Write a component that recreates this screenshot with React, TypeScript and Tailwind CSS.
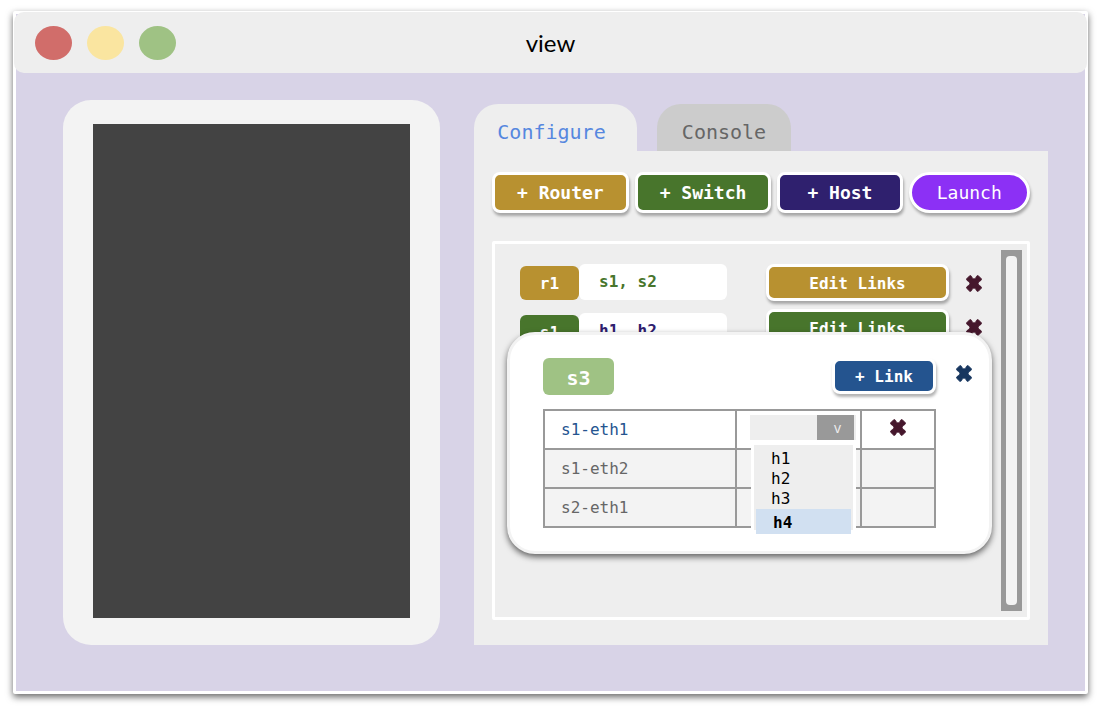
import React from 'react';

type Tone = 'gold' | 'green' | 'navy';

const toneBg: Record<Tone, string> = {
  gold: 'bg-[#b89130]',
  green: 'bg-[#48752c]',
  navy: 'bg-[#2f206e]',
};

const devices: { name: string; tone: Tone; links: string; linksClass: string }[] = [
  { name: 'r1', tone: 'gold', links: 's1, s2', linksClass: 'text-[#48752c]' },
  { name: 's1', tone: 'green', links: 'h1, h2', linksClass: 'text-[#2f206e]' },
];

const ports = [
  { name: 's1-eth1', active: true },
  { name: 's1-eth2', active: false },
  { name: 's2-eth1', active: false },
];

const hosts = ['h1', 'h2', 'h3'];

const raised = 'border-3 border-white shadow-[1px_3px_3px_rgba(0,0,0,0.3)]';

function Cross() {
  return (
    <svg viewBox="0 0 16 17" className="block h-[17px] w-4" fill="currentColor" aria-hidden="true">
      <path d="M4 0.4 L5.4 1.2 L6.4 3.2 L8 4 L9.6 3.2 L10.6 1.2 L12 0.4 L15.6 4 L15 5.4 L12.9 6.8 L12.1 8.5 L12.9 10.2 L15 11.6 L15.6 13 L12 16.6 L10.6 15.8 L9.6 13.8 L8 13 L6.4 13.8 L5.4 15.8 L4 16.6 L0.4 13 L1 11.6 L3.1 10.2 L3.9 8.5 L3.1 6.8 L1 5.4 L0.4 4 Z" stroke="currentColor" strokeWidth="0.8" strokeLinejoin="round" />
    </svg>
  );
}

function AddButton({ label, tone, grow }: { label: string; tone: Tone; grow: string }) {
  return (
    <button type="button" className={`${grow} ${toneBg[tone]} ${raised} h-[41px] rounded-lg text-lg font-bold text-white`}>
      {label}
    </button>
  );
}

function LinkDialog() {
  return (
    <section
      role="dialog"
      aria-label="Links of s3"
      className="absolute top-[88px] right-[35px] left-3 rounded-[28px] border-3 border-[#f3f3f3] bg-white pt-[23px] pr-[17px] pb-[23px] pl-[33px] shadow-[0_3px_6px_rgba(0,0,0,0.6)]"
    >
      <div className="flex items-start">
        <h2 className="flex h-[37px] w-[71px] items-center justify-center rounded-md bg-[#9fc284] pt-[2px] text-xl font-bold text-white">
          s3
        </h2>
        <button type="button" className={`${raised} ml-auto h-9 w-[104px] rounded-lg bg-[#24548f] pt-[2px] text-base font-bold text-white`}>
          + Link
        </button>
        <button type="button" aria-label="Close" className="mt-[7px] ml-[20px] text-[#17365f]">
          <Cross />
        </button>
      </div>
      <table className="mt-[14px] w-[391px] table-fixed border-collapse">
        <colgroup>
          <col className="w-[192px]" />
          <col className="w-[125px]" />
          <col className="w-[74px]" />
        </colgroup>
        <tbody>
          {ports.map((port) => (
            <tr key={port.name} className={port.active ? 'h-[39px] bg-white' : 'h-[39px] bg-[#f3f3f3]'}>
              <td className={`border-2 border-[#999999] py-0 pl-[16px] text-base leading-6 ${port.active ? 'text-[#24548f]' : 'text-[#666666]'}`}>
                {port.name}
              </td>
              <td className="border-2 border-[#999999] p-0 pl-[13px] align-top">{port.active && <HostPicker />}</td>
              <td className="border-2 border-[#999999] p-0 pt-2 align-top">
                {port.active && (
                  <button type="button" aria-label={`Remove ${port.name}`} className="mx-auto block text-[#45172c]">
                    <Cross />
                  </button>
                )}
              </td>
            </tr>
          ))}
        </tbody>
      </table>
    </section>
  );
}

function HostPicker() {
  return (
    <div className="relative mt-1 w-[106px]">
      <select aria-label="Link target" defaultValue="" className="block h-[25px] w-full appearance-none bg-[#eeeeee] text-base">
        <option value=""></option>
        {[...hosts, 'h4'].map((host) => (
          <option key={host}>{host}</option>
        ))}
      </select>
      <span className="pointer-events-none absolute inset-y-0 right-[2px] flex w-[37px] items-center justify-center bg-[#999999] pl-1 font-['Open_Sans',sans-serif] text-sm text-[#eeeeee]">
        v
      </span>
      <ul role="listbox" aria-label="Hosts" className="absolute top-[27px] left-[1px] w-[105px] border-3 border-white bg-[#eeeeee] pt-1 text-base leading-5 text-black">
        {hosts.map((host) => (
          <li key={host} role="option" aria-selected="false" className="pl-[17px]">
            {host}
          </li>
        ))}
        <li role="option" aria-selected="true" className="mx-[2px] -mb-1 bg-[#d1e0f1] pt-[3px] pl-[17px] font-bold leading-[22px]">
          h4
        </li>
      </ul>
    </div>
  );
}

export default function App() {
  return (
    <div className="flex min-h-screen flex-col bg-white pt-[11px] pr-3 pb-3 pl-[13px] font-['DejaVu_Sans_Mono',monospace]">
      <div className="flex flex-1 flex-col rounded-[2px] border-3 border-white bg-[#d8d3e7] shadow-[0_3px_7px_rgba(0,0,0,0.6)]">
        <header className="-mx-[2px] -mt-[2px] grid h-[61px] grid-cols-[1fr_auto_1fr] items-center rounded-[10px] bg-[#eeeeee] px-[21px]">
          <div className="flex gap-[15px]">
            <span className="h-[34px] w-[37px] rounded-[50%] bg-[#d16d6a]" />
            <span className="h-[34px] w-[37px] rounded-[50%] bg-[#fae5a0]" />
            <span className="h-[34px] w-[37px] rounded-[50%] bg-[#9fc284]" />
          </div>
          <h1 className="font-['Lato',sans-serif] text-2xl text-black">view</h1>
        </header>

        <main className="grid flex-1 grid-cols-[377fr_574fr] gap-[34px] pt-[27px] pr-[37px] pb-[46px] pl-[47px]">
          <section aria-label="Topology" className="flex rounded-[28px] bg-[#f3f3f3] px-[30px] pt-6 pb-[27px]">
            <div className="flex-1 bg-[#434343]" />
          </section>

          <section className="flex flex-col pt-1">
            <div role="tablist" className="flex gap-5">
              <button type="button" role="tab" aria-selected="true" className="h-[47px] w-[163px] rounded-t-3xl bg-[#eeeeee] pt-2 pr-2 text-xl text-[#5687df]">
                Configure
              </button>
              <button type="button" role="tab" aria-selected="false" className="h-[47px] w-[134px] rounded-t-3xl bg-[#cccccc] pt-2 text-xl text-[#666666]">
                Console
              </button>
            </div>

            <div className="flex flex-1 flex-col bg-[#eeeeee] pt-[21px] pr-[18px] pb-[25px] pl-[18px]">
              <div className="flex gap-[6px]">
                <AddButton label="+ Router" tone="gold" grow="flex-[137]" />
                <AddButton label="+ Switch" tone="green" grow="flex-[137]" />
                <AddButton label="+ Host" tone="navy" grow="flex-[125]" />
                <button type="button" className={`${raised} h-[41px] flex-[121] rounded-full bg-[#8c30f5] text-lg text-white`}>
                  Launch
                </button>
              </div>

              <div className="relative mt-7 flex flex-1 rounded-[2px] border-3 border-white py-[6px] pr-[5px] pl-[25px]">
                <div className="flex flex-1 items-start pt-[14px]">
                  <div className="flex flex-col gap-[13px]">
                    {devices.map((d) => (
                      <div key={d.name} className="flex">
                        <span className={`${toneBg[d.tone]} mt-[2px] flex h-[34px] w-[59px] items-center justify-center rounded-md pt-[2px] text-base font-bold text-white`}>
                          {d.name}
                        </span>
                        <span className={`${d.linksClass} flex h-9 w-[148px] items-center rounded-md bg-white pl-5 text-base font-bold`}>
                          {d.links}
                        </span>
                      </div>
                    ))}
                  </div>
                  <div className="ml-auto flex flex-col gap-2">
                    {devices.map((d) => (
                      <button key={d.name} type="button" className={`${toneBg[d.tone]} ${raised} h-[37px] w-[183px] rounded-lg pt-[2px] text-base font-bold text-white`}>
                        Edit Links
                      </button>
                    ))}
                  </div>
                  <div className="mt-[11px] mr-[19px] ml-[17px] flex flex-col gap-[27px] text-[#45172c]">
                    {devices.map((d) => (
                      <button key={d.name} type="button" aria-label={`Remove ${d.name}`}>
                        <Cross />
                      </button>
                    ))}
                  </div>
                </div>
                <div className="flex w-[21px] bg-[#999999] px-[5px] py-[6px]">
                  <div className="flex-1 rounded-[4px] bg-[#f3f3f3]" />
                </div>
                <LinkDialog />
              </div>
            </div>
          </section>
        </main>
      </div>
    </div>
  );
}
